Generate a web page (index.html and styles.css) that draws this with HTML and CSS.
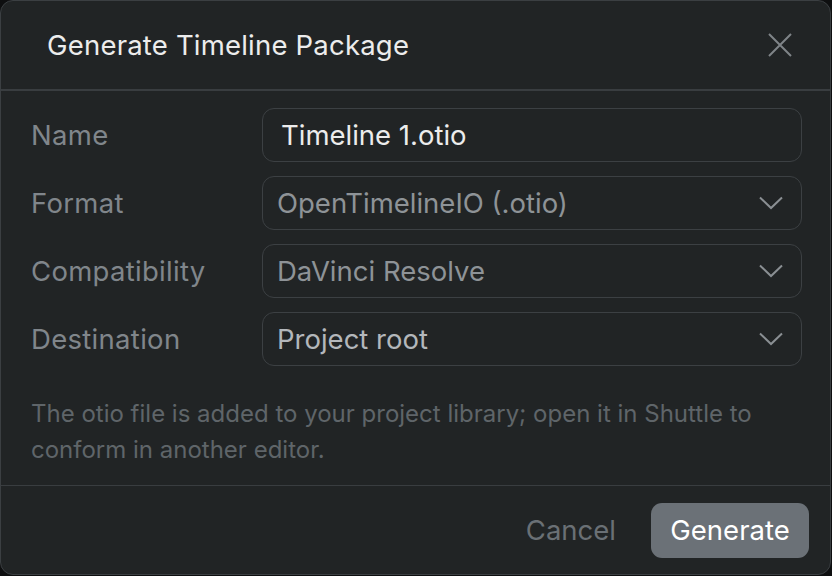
FILE: index.html
```html
<!DOCTYPE html>
<html>
<head>
<meta charset="utf-8">
<link rel="stylesheet" href="styles.css">
</head>
<body>
<div class="dialog">
  <div class="header">
    <div class="title">Generate Timeline Package</div>
    <button class="close" aria-label="Close">
      <svg width="24" height="24" viewBox="0 0 24 24"><path d="M1 1 L23 23 M23 1 L1 23" stroke="#7f8488" stroke-width="2" fill="none"/></svg>
    </button>
  </div>
  <div class="body">
    <div class="form">
      <div class="label">Name</div>
      <div class="field input"><span class="val-name">Timeline 1.otio</span></div>
      <div class="label">Format</div>
      <div class="field select"><span class="val-muted">OpenTimelineIO (.otio)</span>
        <svg class="chev" width="24" height="14" viewBox="0 0 24 14"><path d="M1 1.5 L12 12 L23 1.5" stroke="#8a8f93" stroke-width="2" fill="none"/></svg></div>
      <div class="label">Compatibility</div>
      <div class="field select"><span class="val-muted">DaVinci Resolve</span>
        <svg class="chev" width="24" height="14" viewBox="0 0 24 14"><path d="M1 1.5 L12 12 L23 1.5" stroke="#8a8f93" stroke-width="2" fill="none"/></svg></div>
      <div class="label">Destination</div>
      <div class="field select"><span class="val-light">Project root</span>
        <svg class="chev" width="24" height="14" viewBox="0 0 24 14"><path d="M1 1.5 L12 12 L23 1.5" stroke="#8a8f93" stroke-width="2" fill="none"/></svg></div>
    </div>
    <p class="help">The otio file is added to your project library; open it in Shuttle to conform in another editor.</p>
  </div>
  <div class="footer">
    <button class="btn cancel">Cancel</button>
    <button class="btn primary">Generate</button>
  </div>
</div>
</body>
</html>
```

FILE: styles.css
```css
* { box-sizing: border-box; }
html, body { margin: 0; padding: 0; }
body {
  background: #0e0f10;
  width: 832px;
  height: 576px;
  font-family: Inter, "Noto Sans", sans-serif;
}
.dialog {
  width: 831px;
  height: 575px;
  background: #212425;
  border: 1px solid #3b3f42;
  border-radius: 13px;
  display: flex;
  flex-direction: column;
}
.header {
  height: 90px;
  flex: none;
  display: flex;
  align-items: center;
  justify-content: space-between;
  padding: 0 38px 0 46px;
  border-bottom: 2px solid #393d40;
}
.title {
  color: #ececec;
  font-size: 27.5px;
  letter-spacing: 0.2px;
}
.close {
  background: none;
  border: 0;
  padding: 0;
  width: 24px;
  height: 24px;
  display: flex;
}
.body {
  padding: 17px 28px 0 30px;
  flex: none;
  border-bottom: 1px solid #393d40;
}
.form {
  display: grid;
  grid-template-columns: 231px 1fr;
  row-gap: 14px;
}
.label {
  color: #80868b;
  font-size: 27.5px;
  letter-spacing: 0.3px;
  display: flex;
  align-items: center;
}
.field {
  height: 54px;
  border: 1.5px solid #3c4043;
  border-radius: 12px;
  display: flex;
  align-items: center;
  justify-content: space-between;
  font-size: 27.5px;
  padding: 0 18px 0 14px;
}
.input { padding-left: 18px; }
.val-name { color: #ececec; }
.val-muted { color: #8e9397; }
.val-light { color: #b3b7bb; }
.chev { display: block; }
.help {
  margin: 30px 0 0;
  padding-bottom: 17px;
  color: #5f6569;
  font-size: 24px;
  line-height: 36px;
}
.footer {
  flex: 1;
  display: flex;
  align-items: center;
  justify-content: flex-end;
  padding: 0 21px 0 0;
  gap: 35px;
}
.btn {
  font-family: Inter, "Noto Sans", sans-serif;
  font-size: 27.5px;
  border: 0;
  background: none;
  padding: 0;
}
.cancel { color: #6a7075; }
.primary {
  background: #6b7177;
  color: #ffffff;
  height: 55px;
  width: 158px;
  border-radius: 11px;
}
```
